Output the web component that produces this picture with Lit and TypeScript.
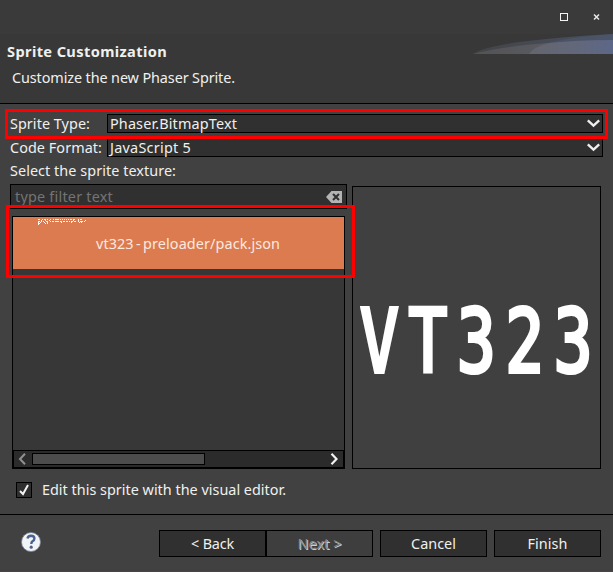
import { LitElement, html, css, svg } from "lit";
import { customElement, property } from "lit/decorators.js";

/** A line of text whose letter spacing is adjusted to fill a given width. */
@customElement("fit-text")
class FitText extends LitElement {
  @property({ type: Number }) width = 0;
  @property() text = "";
  static styles = css`
    :host { display: inline-block; white-space: pre; line-height: 20px; }
    .run { display: inline-block; }
  `;
  firstUpdated() {
    const run = this.renderRoot.querySelector(".run") as HTMLElement;
    const natural = run.getBoundingClientRect().width;
    run.style.letterSpacing = `${(this.width - natural) / this.text.length}px`;
  }
  render() {
    return html`<span class="run">${this.text}</span>`;
  }
}

// Lit pixels of the font sheet thumbnail, one string per row.
const thumb = [
  "##..#.##.#..#..#.####.#.#.#.#.#.##.##...#.##....",
  "...#...#...#.......................#....#......#",
  "##.#.#..##..#.##.####.##.##.##.#.##.##..#.###.#.",
  "#.#...#..#.............#.........#.......#.#....",
  "##.....#.#......................................",
  "#...............................................",
];

@customElement("app-root")
class AppRoot extends LitElement {
  static styles = css`
    :host {
      display: flex; flex-direction: column; width: 613px; height: 572px;
      box-sizing: border-box; overflow: hidden; position: relative;
      background: #414141; color: #f0f0ee;
      font: 14.4px "Noto Sans", "Open Sans", sans-serif;
    }
    * { box-sizing: border-box; }
    svg { display: block; flex: none; }
    .titlebar { height: 34px; background: #3a3a3a; flex: none; display: flex; justify-content: flex-end; padding: 12px 13px 0 0; gap: 23px; }
    .header { height: 70px; background: #383838; border-bottom: 1px solid #000; flex: none; display: flex; justify-content: space-between; }
    .heading { display: flex; flex-direction: column; padding: 7px 0 0 7px; gap: 7px; }
    .title { font-weight: 700; font-size: 14.6px; }
    .subtitle { padding-left: 5px; }
    .form { height: 410px; flex: none; padding: 10px 10px 0; }
    .row { display: flex; height: 20px; }
    .label { width: 97px; flex: none; height: 20px; }
    .combo { width: 496px; height: 19px; background: #303030; border: 1px solid #000; display: flex; justify-content: space-between; align-items: center; padding: 0 2px 0 2px; }
    .second { margin-top: 4px; }
    .caption { margin-top: 3px; height: 20px; }
    .panes { display: flex; margin-top: 3px; gap: 5px; }
    .left { width: 337px; }
    .filter { height: 25px; border: 1px solid #000; background: #303030; color: #747474; display: flex; align-items: center; justify-content: space-between; padding: 0 4px; }
    .list { width: 333px; height: 253px; margin: 7px 0 0 2px; border: 1px solid #000; background: #373737; display: flex; flex-direction: column; justify-content: space-between; }
    .item { height: 52px; background: #db7b4f; position: relative; padding: 17px 0 0 83px; color: #fbe9e0; }
    .item fit-text { word-spacing: -1.5px; }
    .thumb { position: absolute; left: 25px; top: 2px; }
    .scroll { height: 18px; background: #2b2b2b; border: 1px solid #000; display: flex; align-items: center; padding: 0 6px 0 4px; }
    .thumbbar { width: 173px; height: 12px; background: #4c4c4c; border: 1px solid #000; margin: 0 125px 0 6px; flex: none; }
    .preview { width: 249px; height: 283px; margin-top: 2px; border: 1px solid #000; background: #404040; display: flex; align-items: center; overflow: hidden; }
    .bitmap { font: 400 87px/100px "DejaVu Sans Mono", monospace; letter-spacing: 13.1px; color: #fff; -webkit-text-stroke: 4px #fff; transform: scaleX(.74); transform-origin: 0 50%; margin: 29px 0 0 7px; }
    .check { display: flex; gap: 10px; padding: 11px 0 0 6px; }
    .box { width: 16px; height: 16px; margin-top: 2px; background: #2f2f2f; border: 1px solid #000; }
    .footer { flex: 1; border-top: 1px solid #000; border-bottom: 1px solid #4b4646; display: flex; padding: 15px 12px 0 21px; }
    .help { margin: 1px 117px 0 0; }
    .button { width: 107px; height: 27px; background: #303030; border: 1px solid #000; display: flex; justify-content: center; align-items: center; flex: none; }
    .disabled { background: #3e3e3e; color: #858b90; text-shadow: 1px 1px 0 #d0d0cc; }
    .gap { margin-left: 7px; }
    .mark { position: absolute; border: 3px solid #fe0000; }
    .mark-type { left: 5px; top: 109px; width: 603px; height: 30px; }
    .mark-item { left: 6px; top: 205px; width: 349px; height: 73px; }
  `;

  chevron() {
    return html`<svg width="13" height="9" viewBox="0 0 13 9"><path d="M.8 1.3 6.5 6.7l5.7-5.4" fill="none" stroke="#efefed" stroke-width="2.3"/></svg>`;
  }

  render() {
    return html`
      <div class="titlebar">
        <svg width="10" height="10"><rect x="1.5" y="1.5" width="7" height="7" fill="none" stroke="#f4f4f4"/></svg>
        <svg width="8" height="10"><path d="M2 2.5 7 7.5M7 2.5 2 7.5" stroke="#e8e8e8" stroke-width="1.5"/></svg>
      </div>
      <div class="header">
        <div class="heading">
          <fit-text class="title" text="Sprite Customization" width="160"></fit-text>
          <fit-text class="subtitle" text="Customize the new Phaser Sprite." width="223"></fit-text>
        </div>
        <svg width="140" height="20" viewBox="0 0 140 20">
          <defs>
            <linearGradient id="a"><stop stop-color="#444446"/><stop offset="1" stop-color="#485064"/></linearGradient>
            <linearGradient id="b"><stop stop-color="#535355"/><stop offset=".6" stop-color="#5a5b62"/><stop offset="1" stop-color="#586180"/></linearGradient>
            <linearGradient id="c"><stop stop-color="#64656c"/><stop offset=".6" stop-color="#62687c"/><stop offset="1" stop-color="#5c6788"/></linearGradient>
          </defs>
          <path d="M0 20Q16 7 140 0V20Z" fill="url(#a)"/>
          <path d="M0 20Q45 8 140 6V20Z" fill="url(#b)"/>
          <path d="M56 20Q66 5 140 0V20Z" fill="#4e586c" opacity=".6"/>
          <path d="M56 20Q60 13 76 9Q105 6 140 6V20Z" fill="url(#c)"/>
        </svg>
      </div>
      <div class="form">
        <div class="row">
          <div class="label"><fit-text text="Sprite Type:" width="80"></fit-text></div>
          <div class="combo"><fit-text text="Phaser.BitmapText" width="127"></fit-text>${this.chevron()}</div>
        </div>
        <div class="row second">
          <div class="label"><fit-text text="Code Format:" width="92"></fit-text></div>
          <div class="combo"><fit-text text="JavaScript 5" width="81"></fit-text>${this.chevron()}</div>
        </div>
        <div class="caption"><fit-text text="Select the sprite texture:" width="166"></fit-text></div>
        <div class="panes">
          <div class="left">
            <div class="filter">
              <fit-text text="type filter text" width="98"></fit-text>
              <svg width="16" height="12" viewBox="0 0 16 12"><path d="M0 6 5.5 0H16V12H5.5Z" fill="#b4b4b4"/><path d="m7 3 6 6M13 3 7 9" stroke="#303030" stroke-width="2"/></svg>
            </div>
            <div class="list">
              <div class="item">
                <svg class="thumb" width="48" height="6" shape-rendering="crispEdges" fill="#fff3ec">
                  ${thumb.flatMap((row, y) => [...row].map((c, x) => (c === "#" ? svg`<rect x=${x} y=${y} width="1" height="1"/>` : "")))}
                </svg>
                <fit-text text="vt323 - preloader/pack.json" width="184"></fit-text>
              </div>
              <div class="scroll">
                <svg width="8" height="12" viewBox="0 0 8 12"><path d="M7 .8 2 6l5 5.2" fill="none" stroke="#909090" stroke-width="2"/></svg>
                <div class="thumbbar"></div>
                <svg width="8" height="12" viewBox="0 0 8 12"><path d="M1.5 .8 6.5 6l-5 5.2" fill="none" stroke="#f2f2f0" stroke-width="2.2"/></svg>
              </div>
            </div>
          </div>
          <div class="preview"><div class="bitmap">VT323</div></div>
        </div>
        <div class="check">
          <div class="box"><svg width="14" height="14"><path d="m3 8 3 3 5-9" fill="none" stroke="#f4f4f4" stroke-width="2"/></svg></div>
          <fit-text text="Edit this sprite with the visual editor." width="244"></fit-text>
        </div>
      </div>
      <div class="footer">
        <svg class="help" width="21" height="21" viewBox="0 0 21 21">
          <circle cx="10" cy="11" r="9.5" fill="#f1f3f5" stroke="#77829a" stroke-width=".8"/>
          <path d="M6.5 7.5Q6.9 4.7 10.1 4.7 13.4 4.8 13.4 7.5 13.4 9.1 11.5 10.3 10.3 11.1 10.3 13" fill="none" stroke="#4c628e" stroke-width="2.4"/>
          <circle cx="10.2" cy="16.2" r="1.6" fill="#4c628e"/>
        </svg>
        <div class="button"><fit-text text="&lt; Back" width="43"></fit-text></div>
        <div class="button disabled"><fit-text text="Next &gt;" width="44"></fit-text></div>
        <div class="button gap"><fit-text text="Cancel" width="45"></fit-text></div>
        <div class="button gap"><fit-text text="Finish" width="40"></fit-text></div>
      </div>
      <div class="mark mark-type"></div>
      <div class="mark mark-item"></div>
    `;
  }
}
